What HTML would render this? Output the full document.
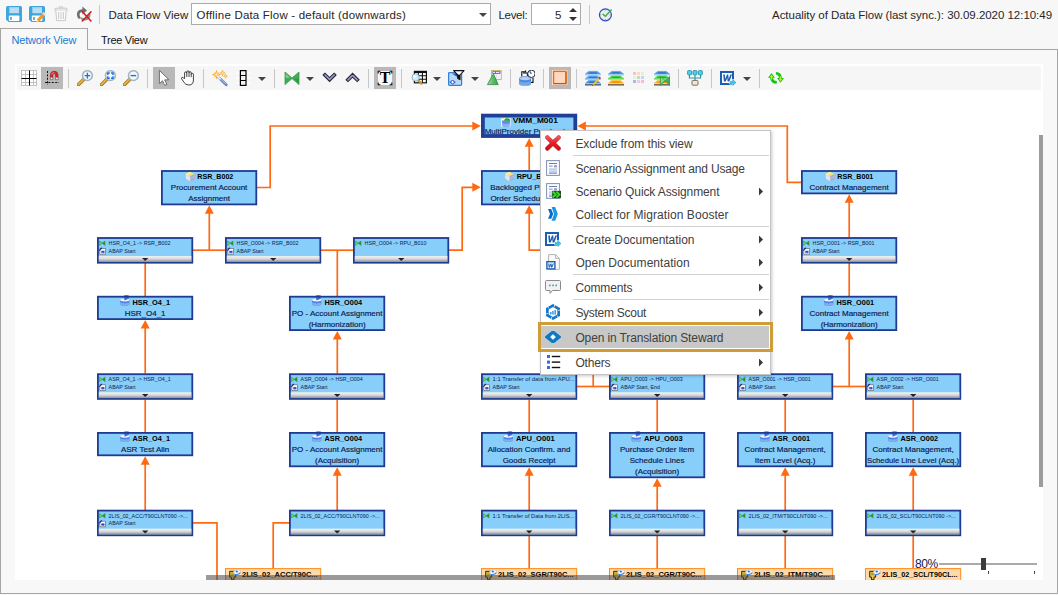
<!DOCTYPE html>
<html lang="en"><head><meta charset="utf-8"><title>Data Flow View</title>
<style>
*{box-sizing:border-box;margin:0;padding:0}
html,body{width:1058px;height:595px;overflow:hidden;background:#f7f7f7;font-family:"Liberation Sans",sans-serif;font-size:12px;color:#262626}
.abs{position:absolute}
#top{position:absolute;left:0;top:0;width:1058px;height:29px}
.tic{position:absolute;top:6px;width:16px;height:16px}
.vsep{position:absolute;top:5px;width:1px;height:19px;background:#c8c8c8}
.lbl{position:absolute;top:7px;height:16px;line-height:16px;white-space:nowrap;font-size:11.5px;color:#262626}
.box{position:absolute;top:3px;height:22px;background:#fff;border:1px solid #ababab}
.tabs{position:absolute;left:0;top:28px;height:22px}
.tab{position:absolute;top:0;height:22px;line-height:22px;font-size:11px;white-space:nowrap}
#panel{position:absolute;left:0;top:49px;width:1058px;height:545px;border:1px solid #a6a6a6;background:#f8f8f8}
#tabact{position:absolute;left:0;top:28px;width:88px;height:22px;border:1px solid #a6a6a6;border-bottom:none;background:#f8f8f8}
#canvas{position:absolute;left:15px;top:64px;width:1028px;height:516px;background:#fff;overflow:hidden}
#ctb{position:absolute;left:2px;top:2px;width:1024px;height:24px;background:#f6f6f6}
.ti{position:absolute;top:70px;width:16px;height:16px}
.ti svg,.tic svg,.mic svg{display:block}
.pressed{position:absolute;top:67px;width:22px;height:22px;background:#b9b9b9}
.tsep{position:absolute;top:69px;width:1px;height:19px;background:#c6c6c6}
.tdd{position:absolute;top:77px;width:0;height:0;border-left:4px solid transparent;border-right:4px solid transparent;border-top:4px solid #444}
svg.dg{position:absolute;left:0;top:0}
.menu{position:absolute;left:540px;top:130px;width:231px;height:245px;background:#fff;border:1px solid #c4c4c4;box-shadow:1px 1px 3px rgba(0,0,0,.22);padding-top:1px}
.mi{position:relative;height:23px;line-height:23px;white-space:nowrap}
.mi.hl::before{content:"";position:absolute;left:0;right:1px;top:0;bottom:1px;background:#c8c8c8}
.mic{position:absolute;left:4px;top:3px;width:16px;height:16px}
.mt{position:absolute;left:34.4px;top:1.1px;font-size:12px;color:#404040}
.marr{position:absolute;right:7px;top:7.5px;width:4px;height:8px;background:#3a3a3a;clip-path:polygon(0 0,100% 50%,0 100%)}
.msep{height:2px;margin-left:32px;margin-right:1px;border-top:1px solid #d2d2d2}
.gold{position:absolute;left:538px;top:322px;width:235px;height:30px;border:3px solid #cf9d37}
#vsb{position:absolute;left:1039px;top:135px;width:4px;height:352px;background:#9c9c9c}
#hsb{position:absolute;left:206px;top:575px;width:629px;height:5px;background:rgba(75,75,75,.56)}
#zoom{position:absolute;left:0;top:0}
</style></head><body>

<div id="top">
<div class="tic" style="left:6px"><svg width="16" height="16" viewBox="0 0 16 16" ><path d="M1.5 0 H14.5 Q16 0 16 1.5 V14.5 Q16 16 14.5 16 H2.5 L0 13.5 V1.5 Q0 0 1.5 0Z" fill="#3fa5dd"/><rect x="3.4" y="1" width="9.6" height="6.2" fill="#b9def3"/><rect x="3.4" y="1" width="9.6" height="1.2" fill="#9fd0ee"/><rect x="2.8" y="9.6" width="10.6" height="5.4" rx="0.8" fill="#fff"/><rect x="4.2" y="11" width="1.6" height="3" fill="#3fa5dd"/></svg></div>
<div class="tic" style="left:29px"><svg width="16" height="16" viewBox="0 0 16 16" style="overflow:visible"><path d="M1.5 0 H14.5 Q16 0 16 1.5 V14.5 Q16 16 14.5 16 H2.5 L0 13.5 V1.5 Q0 0 1.5 0Z" fill="#3fa5dd"/><rect x="3.4" y="1" width="9.6" height="6.2" fill="#b9def3"/><rect x="3.4" y="1" width="9.6" height="1.2" fill="#9fd0ee"/><rect x="2.8" y="9.6" width="10.6" height="5.4" rx="0.8" fill="#fff"/><rect x="4.2" y="11" width="1.6" height="3" fill="#3fa5dd"/><path d="M7.4 16 L8.2 13 L13.8 7 L16.2 9.2 L10.4 15.2 Z" fill="#f59a23"/><path d="M13.2 7.6 L14.2 6.6 Q15 6 15.8 6.8 L16.4 7.4 Q17 8.2 16.2 9 L15.6 9.6 Z" fill="#e8e8e8" stroke="#c8c8c8" stroke-width="0.4"/><path d="M7.4 16 L8 13.6 L9.8 15.4 Z" fill="#fbe3b5"/></svg></div>
<div class="tic" style="left:54px"><svg width="14" height="16" viewBox="0 0 14 16" ><path d="M5.4 2 V0.8 H8.6 V2" fill="none" stroke="#c9c9c9" stroke-width="1"/><path d="M0.6 3.6 Q0.6 2.2 2 2.2 H12 Q13.4 2.2 13.4 3.6 V4.2 H0.6 Z" fill="#f3f3f3" stroke="#c9c9c9" stroke-width="1"/><path d="M1.8 4.4 L2.6 14.6 H11.4 L12.2 4.4" fill="#fafafa" stroke="#c9c9c9" stroke-width="1"/><path d="M4.6 6 V13 M7 6 V13 M9.4 6 V13" stroke="#c9c9c9" stroke-width="1"/></svg></div>
<div class="tic" style="left:76px"><svg width="16" height="16" viewBox="0 0 16 16" ><path d="M1 9.4 Q0.2 3.6 6.4 3.2 L6.4 0.6 L11 4.6 L6.4 8.4 L6.4 6 Q3.4 6 3.6 9.2 Q3.8 10.6 4.8 11.6 L3 13 Q1.4 11.6 1 9.4Z" fill="#6f6f6f"/><path d="M4.2 12.4 Q8 16.4 12.6 13.2 Q15 11 14.4 7.6 L12.2 8 Q12.6 10.4 11 11.8 Q8.4 13.6 5.8 11.2 Z" fill="#8c8c8c"/><path d="M6.4 5.8 L15 15 M15 5.8 L6.4 15" stroke="#d81818" stroke-width="1.6" stroke-linecap="round"/></svg></div>
<div class="vsep" style="left:99px"></div>
<div class="lbl" id="l1" style="left:108.5px">Data Flow View</div>
<div class="box" style="left:191px;width:300px"><div class="lbl" id="l2" style="left:4.6px;top:3px;letter-spacing:0.196px">Offline Data Flow - default (downwards)</div>
<div class="tdd" style="left:287px;top:9px;position:absolute"></div></div>
<div class="lbl" id="l3" style="left:498.5px;letter-spacing:-0.315px">Level:</div>
<div class="box" style="left:531px;width:50px"><div class="lbl" id="l4" style="left:23px;top:3px">5</div>
<div class="abs" style="left:37px;top:4px;width:0;height:0;border-left:4px solid transparent;border-right:4px solid transparent;border-bottom:4px solid #333"></div>
<div class="abs" style="left:37px;top:13px;width:0;height:0;border-left:4px solid transparent;border-right:4px solid transparent;border-top:4px solid #333"></div>
</div>
<div class="vsep" style="left:589px"></div>
<div class="tic" style="left:598px"><svg width="16" height="16" viewBox="0 0 16 16" ><circle cx="7.4" cy="8.8" r="6" fill="#ececec" stroke="#3149c9" stroke-width="1.2"/><path d="M7.4 3.6 V4.6 M7.4 13 V14 M2.2 8.8 H3.2 M11.6 8.8 H12.6" stroke="#888" stroke-width="0.8"/><path d="M4.6 8 L7.4 10.2 L13.6 3.6" fill="none" stroke="#3db44a" stroke-width="1.5"/></svg></div>
<div class="lbl" id="l5" style="right:6px;letter-spacing:-0.034px">Actuality of Data Flow (last sync.): 30.09.2020 12:10:49</div>
</div>

<div id="panel"></div>
<div id="tabact"></div>
<div class="tab" id="t1" style="left:11.5px;letter-spacing:-0.2px;top:29px;color:#1b79d3;position:absolute">Network View</div>
<div class="tab" id="t2" style="left:101px;letter-spacing:-0.29px;top:29px;color:#111;position:absolute">Tree View</div>
<div id="canvas">
<div id="ctb">
<div style="position:absolute;left:-17px;top:-66px"><div class="ti" style="left:21px"><svg width="16" height="16" viewBox="0 0 16 16" ><rect x="0" y="0" width="16" height="16" fill="#fff"/><path d="M0.5 0 V16 M0 0.5 H16" stroke="#c2c2c2" stroke-width="1"/><path d="M4.5 0 V16 M0 4.5 H16" stroke="#c2c2c2" stroke-width="1"/><path d="M12.5 0 V16 M0 12.5 H16" stroke="#c2c2c2" stroke-width="1"/><path d="M15.5 0 V16 M0 15.5 H16" stroke="#c2c2c2" stroke-width="1"/><path d="M8.5 0.5 V15.5 M0.5 8.5 H15.5" stroke="#000" stroke-width="1"/></svg></div>
<div class="pressed" style="left:41px"></div>
<div class="ti" style="left:44px"><svg width="16" height="16" viewBox="0 0 16 16" ><path d="M3.5 1 V15" stroke="#111" stroke-width="1" stroke-dasharray="2 1.4"/><path d="M1 12.5 H15" stroke="#111" stroke-width="1" stroke-dasharray="2 1.4"/><path d="M6.4 9.6 V5 Q6.4 1.2 10.2 1.2 Q14 1.2 14 5 V9.6 H11.6 V5 Q11.6 3.6 10.2 3.6 Q8.8 3.6 8.8 5 V9.6 Z" fill="#d8262c" stroke="#8c1418" stroke-width="0.6"/><rect x="6.4" y="7.4" width="2.4" height="2.2" fill="#e8e8e8" stroke="#777" stroke-width="0.5"/><rect x="11.6" y="7.4" width="2.4" height="2.2" fill="#e8e8e8" stroke="#777" stroke-width="0.5"/><path d="M7.6 4.6 Q7.8 2.6 10 2.4" fill="none" stroke="#f59a9c" stroke-width="0.8"/></svg></div>
<div class="tsep" style="left:68px"></div>
<div class="ti" style="left:77px"><svg width="16" height="16" viewBox="0 0 16 16" ><path d="M1.6 14.6 L6.6 9.6" stroke="#a9791f" stroke-width="3.6" stroke-linecap="round"/><path d="M1.5 14.3 L6.2 9.6" stroke="#e3b54e" stroke-width="1.7" stroke-linecap="round"/><circle cx="10.4" cy="5.6" r="4.9" fill="#f2f8fc" stroke="#a3b6bf" stroke-width="1.5"/><path d="M10.4 2.8 V8.4 M7.6 5.6 H13.2" stroke="#1e6ee8" stroke-width="1.4"/></svg></div>
<div class="ti" style="left:100px"><svg width="16" height="16" viewBox="0 0 16 16" ><path d="M1.6 14.6 L6.6 9.6" stroke="#a9791f" stroke-width="3.6" stroke-linecap="round"/><path d="M1.5 14.3 L6.2 9.6" stroke="#e3b54e" stroke-width="1.7" stroke-linecap="round"/><circle cx="10.4" cy="5.6" r="4.9" fill="#f2f8fc" stroke="#a3b6bf" stroke-width="1.5"/><path d="M7.8 5 V3 H9.8 M11 3 H13 V5 M13 6.2 V8.2 H11 M9.8 8.2 H7.8 V6.2" fill="none" stroke="#1e6ee8" stroke-width="1.4"/></svg></div>
<div class="ti" style="left:123px"><svg width="16" height="16" viewBox="0 0 16 16" ><path d="M1.6 14.6 L6.6 9.6" stroke="#a9791f" stroke-width="3.6" stroke-linecap="round"/><path d="M1.5 14.3 L6.2 9.6" stroke="#e3b54e" stroke-width="1.7" stroke-linecap="round"/><circle cx="10.4" cy="5.6" r="4.9" fill="#f2f8fc" stroke="#a3b6bf" stroke-width="1.5"/><path d="M7.6 5.6 H13.2" stroke="#1e6ee8" stroke-width="1.4"/></svg></div>
<div class="tsep" style="left:147px"></div>
<div class="pressed" style="left:153px"></div>
<div class="ti" style="left:156px"><svg width="16" height="16" viewBox="0 0 16 16" ><path d="M4.6 2 V14.6 L7.6 12 L9.6 16 L11.6 15 L9.6 11 L13.4 10.8 Z" fill="#9a9a9a" opacity="0.5"/><path d="M3.4 0.4 V13.6 L6.5 10.8 L8.7 15.4 L10.9 14.4 L8.7 9.9 L12.9 9.7 Z" fill="#fff" stroke="#707070" stroke-width="1" stroke-linejoin="round"/></svg></div>
<div class="ti" style="left:179px"><svg width="16" height="16" viewBox="0 0 16 16" style="overflow:visible"><path d="M5.6 8.6 V3 Q5.6 1.9 6.7 1.9 Q7.8 1.9 7.8 3 V2 Q7.8 0.9 8.9 0.9 Q10 0.9 10 2 V2.8 Q10 1.7 11.1 1.7 Q12.2 1.7 12.2 2.8 V4.4 Q12.2 3.4 13.3 3.4 Q14.4 3.4 14.4 4.4 V10 Q14.4 15 9.8 15 Q6.6 15 5.2 12.6 L2.6 8.8 Q2.1 7.8 2.9 7.4 Q3.8 7.1 4.5 8 Z" fill="#fff" stroke="#111" stroke-width="0.8" stroke-linejoin="round"/><path d="M7.8 3 V7 M10 2.8 V7 M12.2 4.4 V7.2" stroke="#111" stroke-width="0.8"/></svg></div>
<div class="tsep" style="left:203px"></div>
<div class="ti" style="left:212px"><svg width="16" height="16" viewBox="0 0 16 16" style="overflow:visible"><path d="M4.4 -0.20000000000000018 L5.456 3.5439999999999996 L9.2 4.6 L5.456 5.656 L4.4 9.399999999999999 L3.3440000000000003 5.656 L-0.39999999999999947 4.6 L3.3440000000000003 3.5439999999999996 Z" fill="#ff8f24"/><g transform="rotate(45 4.4 4.6)"><path d="M4.4 1.0 L5.192 3.808 L8.0 4.6 L5.192 5.3919999999999995 L4.4 8.2 L3.6080000000000005 5.3919999999999995 L0.8000000000000007 4.6 L3.6080000000000005 3.808 Z" fill="#ffa338"/></g><path d="M4.4 1.6239999999999997 L5.292800000000001 3.7072 L7.376 4.6 L5.292800000000001 5.4928 L4.4 7.576 L3.5072000000000005 5.4928 L1.4240000000000004 4.6 L3.5072000000000005 3.7072 Z" fill="#ffd65a"/><circle cx="4.4" cy="4.6" r="0.96" fill="#fff6cc"/><path d="M10.6 -0.6000000000000001 L11.392 2.208 L14.2 3 L11.392 3.792 L10.6 6.6 L9.808 3.792 L7.0 3 L9.808 2.208 Z" fill="#ff8f24"/><g transform="rotate(45 10.6 3)"><path d="M10.6 0.2999999999999998 L11.193999999999999 2.4059999999999997 L13.3 3 L11.193999999999999 3.5940000000000003 L10.6 5.7 L10.006 3.5940000000000003 L7.8999999999999995 3 L10.006 2.4059999999999997 Z" fill="#ffa338"/></g><path d="M10.6 0.7679999999999998 L11.2696 2.3304 L12.832 3 L11.2696 3.6696 L10.6 5.232 L9.930399999999999 3.6696 L8.367999999999999 3 L9.930399999999999 2.3304 Z" fill="#ffd65a"/><circle cx="10.6" cy="3" r="0.72" fill="#fff6cc"/><path d="M13.6 3.4000000000000004 L14.216 5.5840000000000005 L16.4 6.2 L14.216 6.816 L13.6 9.0 L12.984 6.816 L10.8 6.2 L12.984 5.5840000000000005 Z" fill="#ff8f24"/><g transform="rotate(45 13.6 6.2)"><path d="M13.6 4.1000000000000005 L14.062 5.738 L15.7 6.2 L14.062 6.662 L13.6 8.3 L13.138 6.662 L11.5 6.2 L13.138 5.738 Z" fill="#ffa338"/></g><path d="M13.6 4.464 L14.1208 5.6792 L15.336 6.2 L14.1208 6.7208000000000006 L13.6 7.936 L13.0792 6.7208000000000006 L11.863999999999999 6.2 L13.0792 5.6792 Z" fill="#ffd65a"/><circle cx="13.6" cy="6.2" r="0.56" fill="#fff6cc"/><path d="M6 6.8 L14.2 14.8" stroke="#6d7fb4" stroke-width="2.8" stroke-linecap="round"/><path d="M5.8 6.4 L8 8.6" stroke="#e8ecf8" stroke-width="2.2" stroke-linecap="round"/><path d="M7 7.4 L13.8 14" stroke="#c4cdec" stroke-width="0.9" stroke-linecap="round"/></svg></div>
<div class="ti" style="left:235px"><svg width="16" height="16" viewBox="0 0 16 16" ><rect x="5.4" y="0.6" width="5.6" height="14.8" fill="#f2f2f2" stroke="#000" stroke-width="1.2"/><path d="M5.4 5.5 H11 M5.4 10.5 H11" stroke="#000" stroke-width="1.2"/><path d="M1 3 H4 M1 8 H4 M1 13 H4 M12.4 3 H15.4 M12.4 8 H15.4 M12.4 13 H15.4" stroke="#fff" stroke-width="1.6"/></svg></div>
<div class="tdd" style="left:258px"></div>
<div class="tsep" style="left:274px"></div>
<div class="ti" style="left:284px"><svg width="16" height="16" viewBox="0 0 16 16" ><path d="M1 2 L8 8 L15 2 V14.6 L8 8.6 L1 14.6 Z" fill="#3fae55" stroke="#2c8c42" stroke-width="0.7" stroke-linejoin="round"/><path d="M1.6 3.4 L6 7.6 L1.6 8 Z" fill="#7fd08c"/><path d="M14.4 13 L10 8.8 L14.4 8.6 Z" fill="#2f9646"/></svg></div>
<div class="tdd" style="left:306px"></div>
<div class="ti" style="left:322px"><svg width="16" height="16" viewBox="0 0 16 16" ><path d="M1.2 5 L3 3.2 L7.6 7.6 L12.2 3.2 L14 5 L7.6 11.4 Z" fill="#9c9cc6" stroke="#26263e" stroke-width="1.1" stroke-linejoin="miter"/></svg></div>
<div class="ti" style="left:345px"><svg width="16" height="16" viewBox="0 0 16 16" ><path d="M1.2 9.8 L3 11.6 L7.6 7.2 L12.2 11.6 L14 9.8 L7.6 3.4 Z" fill="#9c9cc6" stroke="#26263e" stroke-width="1.1" stroke-linejoin="miter"/></svg></div>
<div class="tsep" style="left:368px"></div>
<div class="pressed" style="left:374px"></div>
<div class="ti" style="left:377px"><svg width="16" height="16" viewBox="0 0 16 16" ><rect x="1" y="1" width="14" height="14" fill="#f7f7f7"/><path d="M1.2 3.4 V1.2 H3.4 M12.6 1.2 H14.8 V3.4 M14.8 12.6 V14.8 H12.6 M3.4 14.8 H1.2 V12.6" fill="none" stroke="#111" stroke-width="1.1"/><text x="8" y="13.4" font-family="Liberation Serif, serif" font-weight="bold" font-size="16" text-anchor="middle" fill="#000">T</text></svg></div>
<div class="tsep" style="left:401px"></div>
<div class="ti" style="left:411px"><svg width="16" height="16" viewBox="0 0 16 16" ><rect x="3.4" y="1.4" width="12" height="11.4" fill="#fff" stroke="#111" stroke-width="1.2"/><rect x="3.4" y="1.4" width="12" height="1.6" fill="#111"/><path d="M7.4 1.4 V12.8 M11.4 1.4 V12.8 M3.4 5.8 H15.4 M3.4 9.2 H15.4" stroke="#111" stroke-width="1.1"/><path d="M7 10 L10.4 13.6" stroke="#c8962e" stroke-width="2.4" stroke-linecap="round"/><circle cx="4.6" cy="7.4" r="3.6" fill="#d4ecfa" stroke="#8fb4d0" stroke-width="1"/><circle cx="3.8" cy="6.6" r="1.3" fill="#fff"/></svg></div>
<div class="tdd" style="left:433px"></div>
<div class="ti" style="left:448px"><svg width="16" height="16" viewBox="0 0 16 16" style="overflow:visible"><rect x="0.6" y="2.6" width="13" height="12.8" rx="0.8" fill="#bcd7f5" stroke="#2f80d8" stroke-width="1.2"/><path d="M4 3.4 L10.6 3.4 L10.6 8 Z" fill="#2f57b8"/><circle cx="4.6" cy="12.2" r="1.7" fill="#fff" stroke="#1e4fc0" stroke-width="1"/><path d="M1.6 12.2 H3 M6.2 12.2 H7.6" stroke="#1e4fc0" stroke-width="1"/><path d="M5.6 0.6 H16 L12 5 V9.6 L9.8 8.4 V5 Z" fill="#fff" stroke="#111" stroke-width="1.1" stroke-linejoin="round"/><path d="M9.8 4.8 L12 4.8 V9.6 L9.8 8.4 Z" fill="#111"/></svg></div>
<div class="tdd" style="left:471px"></div>
<div class="ti" style="left:486px"><svg width="16" height="16" viewBox="0 0 16 16" ><defs><linearGradient id="gt" x1="0" y1="0" x2="1" y2="0"><stop offset="0" stop-color="#9fdca4"/><stop offset="0.6" stop-color="#55b862"/><stop offset="1" stop-color="#3f9f4e"/></linearGradient></defs><rect x="5.6" y="0.4" width="9.6" height="9.2" fill="#fff" stroke="#c8a85c" stroke-width="0.9"/><rect x="6.4" y="1.2" width="8" height="2.6" fill="#2f60cc"/><rect x="7.2" y="1.9" width="1.6" height="1.1" fill="#fff"/><rect x="9.8" y="1.9" width="3.6" height="1.1" fill="#e4ecfb"/><rect x="6.4" y="4.4" width="8" height="4.4" fill="#eef1f8"/><path d="M10.4 4.4 V8.8" stroke="#d0d6e6" stroke-width="0.6"/><path d="M7.4 3.8 L12.2 14.6 H1.4 Z" fill="url(#gt)" stroke="#2e8c40" stroke-width="0.8" stroke-linejoin="round"/></svg></div>
<div class="tsep" style="left:510px"></div>
<div class="ti" style="left:519px"><svg width="16" height="16" viewBox="0 0 16 16" ><path d="M6.6 0.6 V1.8 H2.8 V6.6 M4 3 H8.4 V6" fill="none" stroke="#111" stroke-width="1.1"/><path d="M14 7.6 V12.4 H12" fill="none" stroke="#111" stroke-width="1.1"/><path d="M0.2 8.6 V13.4 Q0.2 15.6 6.1 15.6 Q12 15.6 12 13.4 V8.6 Z" fill="#4a88dc"/><path d="M0.2 11 Q6.1 13.4 12 11 V13.4 Q12 15.6 6.1 15.6 Q0.2 15.6 0.2 13.4 Z" fill="#6fa6ec"/><ellipse cx="6.1" cy="8.6" rx="5.9" ry="2.1" fill="#b4d2f6" stroke="#3f78cc" stroke-width="0.6"/><circle cx="12.4" cy="3.8" r="3.7" fill="#fff" stroke="#1a1a1a" stroke-width="0.9"/><path d="M12.4 3.8 L10.8 1.4" stroke="#1e6ee8" stroke-width="1.4"/></svg></div>
<div class="tsep" style="left:543px"></div>
<div class="pressed" style="left:549px"></div>
<div class="ti" style="left:552px"><svg width="16" height="16" viewBox="0 0 16 16" ><rect x="0" y="0" width="15.4" height="15" fill="#ffdccb"/><rect x="1.6" y="1.4" width="12.4" height="12.2" fill="#ffd9c4" stroke="#e8700a" stroke-width="1.3"/><path d="M14 2 V13.6 H2" fill="none" stroke="#b85a08" stroke-width="1"/></svg></div>
<div class="tsep" style="left:576px"></div>
<div class="ti" style="left:585px"><svg width="16" height="16" viewBox="0 0 16 16" ><path d="M3.8 10.1 H12.2 L16 13.2 V14.399999999999999 H0 V13.2 Z" fill="#4f9be8"/><path d="M4.8 11.4 H11.2 L12.6 12.7 H3.4 Z" fill="#2c66b8"/><path d="M0 13.8 H16" stroke="#a9d1fa" stroke-width="1.1"/><path d="M3.8 10.299999999999999 H12.2" stroke="#a9d1fa" stroke-width="0.5"/><rect x="0" y="14.4" width="16" height="1" fill="#2c2c2c"/><path d="M3.8 5.5 H12.2 L16 8.6 V9.8 H0 V8.6 Z" fill="#5ba4ec"/><path d="M4.8 6.8 H11.2 L12.6 8.1 H3.4 Z" fill="#2f6fc4"/><path d="M0 9.2 H16" stroke="#a9d1fa" stroke-width="1.1"/><path d="M3.8 5.7 H12.2" stroke="#a9d1fa" stroke-width="0.5"/><path d="M3.8 0.9 H12.2 L16 4.0 V5.2 H0 V4.0 Z" fill="#4f9be8"/><path d="M4.8 2.2 H11.2 L12.6 3.5 H3.4 Z" fill="#2f6fc4"/><path d="M0 4.6000000000000005 H16" stroke="#a9d1fa" stroke-width="1.1"/><path d="M3.8 1.1 H12.2" stroke="#a9d1fa" stroke-width="0.5"/><path d="M8 15.2 L14.4 8.2" stroke="#f0c53a" stroke-width="1.8"/><path d="M14 8.6 L15.2 7.2" stroke="#e0282e" stroke-width="1.8"/><path d="M7.4 15.8 L8.4 14.6" stroke="#444" stroke-width="1"/></svg></div>
<div class="ti" style="left:608px"><svg width="16" height="16" viewBox="0 0 16 16" ><path d="M3.8 10.1 H12.2 L16 13.2 V14.399999999999999 H0 V13.2 Z" fill="#ffb01f"/><path d="M4.8 11.4 H11.2 L12.6 12.7 H3.4 Z" fill="#f08a00"/><path d="M0 13.8 H16" stroke="#ffdc8c" stroke-width="1.1"/><path d="M3.8 10.299999999999999 H12.2" stroke="#ffdc8c" stroke-width="0.5"/><rect x="0" y="14.4" width="16" height="1" fill="#2c2c2c"/><path d="M3.8 5.5 H12.2 L16 8.6 V9.8 H0 V8.6 Z" fill="#46d644"/><path d="M4.8 6.8 H11.2 L12.6 8.1 H3.4 Z" fill="#1fae28"/><path d="M0 9.2 H16" stroke="#a4f0a0" stroke-width="1.1"/><path d="M3.8 5.7 H12.2" stroke="#a4f0a0" stroke-width="0.5"/><path d="M3.8 0.9 H12.2 L16 4.0 V5.2 H0 V4.0 Z" fill="#4f9be8"/><path d="M4.8 2.2 H11.2 L12.6 3.5 H3.4 Z" fill="#2f6fc4"/><path d="M0 4.6000000000000005 H16" stroke="#a9d1fa" stroke-width="1.1"/><path d="M3.8 1.1 H12.2" stroke="#a9d1fa" stroke-width="0.5"/></svg></div>
<div class="ti" style="left:630px"><svg width="16" height="16" viewBox="0 0 16 16" ><rect x="3" y="2" width="3" height="3" fill="#f8c3c3"/><rect x="7" y="2" width="3" height="3" fill="#f9d9c2"/><rect x="11" y="2" width="3" height="3" fill="#f6eac4"/><rect x="3" y="6" width="3" height="3" fill="#e2f1da"/><rect x="7" y="6" width="3" height="3" fill="#b9e2bb"/><rect x="11" y="6" width="3" height="3" fill="#badaf2"/><rect x="3" y="10" width="3" height="3" fill="#aabbdb"/><rect x="7" y="10" width="3" height="3" fill="#e9caea"/><rect x="11" y="10" width="3" height="3" fill="#f9b9d2"/></svg></div>
<div class="ti" style="left:654px"><svg width="16" height="16" viewBox="0 0 16 16" ><path d="M3.8 10.1 H12.2 L16 13.2 V14.399999999999999 H0 V13.2 Z" fill="#ffb01f"/><path d="M4.8 11.4 H11.2 L12.6 12.7 H3.4 Z" fill="#f08a00"/><path d="M0 13.8 H16" stroke="#ffdc8c" stroke-width="1.1"/><path d="M3.8 10.299999999999999 H12.2" stroke="#ffdc8c" stroke-width="0.5"/><rect x="0" y="14.4" width="16" height="1" fill="#2c2c2c"/><path d="M3.8 5.5 H12.2 L16 8.6 V9.8 H0 V8.6 Z" fill="#46d644"/><path d="M4.8 6.8 H11.2 L12.6 8.1 H3.4 Z" fill="#1fae28"/><path d="M0 9.2 H16" stroke="#a4f0a0" stroke-width="1.1"/><path d="M3.8 5.7 H12.2" stroke="#a4f0a0" stroke-width="0.5"/><path d="M3.8 0.9 H12.2 L16 4.0 V5.2 H0 V4.0 Z" fill="#4f9be8"/><path d="M4.8 2.2 H11.2 L12.6 3.5 H3.4 Z" fill="#2f6fc4"/><path d="M0 4.6000000000000005 H16" stroke="#a9d1fa" stroke-width="1.1"/><path d="M3.8 1.1 H12.2" stroke="#a9d1fa" stroke-width="0.5"/><path d="M6.4 6.4 L11 10.4 L16 6.2 V15.4 L11 11 L6.4 15.4 Z" fill="#3fae55" stroke="#2c8c42" stroke-width="0.5"/><path d="M7 7.6 L10.4 10.6 L7 14 Z" fill="#8fd69a"/></svg></div>
<div class="tsep" style="left:678px"></div>
<div class="ti" style="left:687px"><svg width="16" height="16" viewBox="0 0 16 16" ><path d="M2.4 5 V8 H13.6 V5 M8 5 V11" fill="none" stroke="#2a93a4" stroke-width="1.1"/><rect x="0.6" y="0.6" width="4" height="4.2" rx="0.8" fill="#4fd0f4" stroke="#2a93a4" stroke-width="0.9"/><rect x="6" y="0.6" width="4" height="4.2" rx="0.8" fill="#4fd0f4" stroke="#2a93a4" stroke-width="0.9"/><rect x="11.4" y="0.6" width="4" height="4.2" rx="0.8" fill="#4fd0f4" stroke="#2a93a4" stroke-width="0.9"/><rect x="5" y="10.4" width="6" height="4.8" rx="0.8" fill="#ece6d2" stroke="#7f7460" stroke-width="1"/></svg></div>
<div class="tsep" style="left:711px"></div>
<div class="ti" style="left:720px"><svg width="16" height="16" viewBox="0 0 16 16" ><rect x="1" y="2" width="12" height="12" fill="#fff" stroke="#1b5eb3" stroke-width="2"/><path d="M3.2 4.6 L4.9 4.6 L5.2 9 L7 4.6 L8.3 4.6 L8.6 9 L10.4 4.6 L12 4.6 L9.4 11.6 L7.6 11.6 L7.3 7.8 L5.7 11.6 L3.9 11.6 Z" fill="#1b5eb3"/><path d="M10 11.4 H12.8 V9.6 L16 12.6 L12.8 15.6 V13.8 H10 Z" fill="#3cc8ee" stroke="#fff" stroke-width="1.4" stroke-linejoin="round"/><path d="M10 11.4 H12.8 V9.6 L16 12.6 L12.8 15.6 V13.8 H10 Z" fill="#3cc8ee" stroke="#1d93c4" stroke-width="0.5"/></svg></div>
<div class="tdd" style="left:743px"></div>
<div class="tsep" style="left:759px"></div>
<div class="ti" style="left:768px"><svg width="16" height="16" viewBox="0 0 16 16" style="overflow:visible"><path d="M3.5 3 L7 7.7 H5 Q5.4 10.8 8.8 11.1 V13.8 Q2.6 13.6 2 7.7 H0 Z" fill="#12c612"/><path d="M12.5 12.8 L9 8.1 H11 Q10.6 5 7.9 4.6 V2 Q13.4 2.2 14 8.1 H16 Z" fill="#12c612"/><path d="M3.5 4.6 L5.2 7.2 H4.2 V9.6 H2.9 V7.2 H1.8 Z" fill="#c4f22a"/><path d="M12.5 11.4 L10.8 8.8 H11.8 V6.4 H13.1 V8.8 H14.2 Z" fill="#c4f22a"/></svg></div></div>
</div>
<svg class="dg" width="1028" height="516" viewBox="15 64 1028 516"><path d="M257 187.5 L270.2 187.5 L270.2 126 L475 126" fill="none" stroke="#ff6a10" stroke-width="1.7"/>
<polygon points="480.8,126 472.3,121.5 472.3,130.5" fill="#ff6a10"/>
<path d="M529.2 170 L529.2 144" fill="none" stroke="#ff6a10" stroke-width="1.7"/>
<polygon points="529.2,138.2 524.7,146.7 533.7,146.7" fill="#ff6a10"/>
<path d="M801 182.3 L787.3 182.3 L787.3 126 L583 126" fill="none" stroke="#ff6a10" stroke-width="1.7"/>
<polygon points="577.4,126 585.9,121.5 585.9,130.5" fill="#ff6a10"/>
<path d="M193 250.2 L225 250.2" fill="none" stroke="#ff6a10" stroke-width="1.7"/>
<path d="M209.3 250.2 L209.3 211" fill="none" stroke="#ff6a10" stroke-width="1.7"/>
<polygon points="209.3,205.3 204.8,213.8 213.8,213.8" fill="#ff6a10"/>
<path d="M321 250.2 L353 250.2" fill="none" stroke="#ff6a10" stroke-width="1.7"/>
<path d="M337.3 250.2 L337.3 296" fill="none" stroke="#ff6a10" stroke-width="1.7"/>
<path d="M449 250.2 L462.2 250.2 L462.2 187.3 L475 187.3" fill="none" stroke="#ff6a10" stroke-width="1.7"/>
<polygon points="480.8,187.3 472.3,182.8 472.3,191.8" fill="#ff6a10"/>
<path d="M600 250.2 L529.2 250.2 L529.2 211" fill="none" stroke="#ff6a10" stroke-width="1.7"/>
<polygon points="529.2,205.3 524.7,213.8 533.7,213.8" fill="#ff6a10"/>
<path d="M849.2 237 L849.2 200" fill="none" stroke="#ff6a10" stroke-width="1.7"/>
<polygon points="849.2,194.3 844.7,202.8 853.7,202.8" fill="#ff6a10"/>
<path d="M145.2 296 L145.2 263" fill="none" stroke="#ff6a10" stroke-width="1.7"/>
<path d="M849.2 296 L849.2 263" fill="none" stroke="#ff6a10" stroke-width="1.7"/>
<path d="M145.2 373.5 L145.2 326" fill="none" stroke="#ff6a10" stroke-width="1.7"/>
<polygon points="145.2,320 140.7,328.5 149.7,328.5" fill="#ff6a10"/>
<path d="M337.3 373.5 L337.3 337" fill="none" stroke="#ff6a10" stroke-width="1.7"/>
<polygon points="337.3,331 332.8,339.5 341.8,339.5" fill="#ff6a10"/>
<path d="M833 386.5 L865 386.5" fill="none" stroke="#ff6a10" stroke-width="1.7"/>
<path d="M849.2 386.5 L849.2 337" fill="none" stroke="#ff6a10" stroke-width="1.7"/>
<polygon points="849.2,331 844.7,339.5 853.7,339.5" fill="#ff6a10"/>
<path d="M577 386.5 L609 386.5" fill="none" stroke="#ff6a10" stroke-width="1.7"/>
<path d="M593.2 386.5 L593.2 340" fill="none" stroke="#ff6a10" stroke-width="1.7"/>
<path d="M145.2 432.2 L145.2 399.5" fill="none" stroke="#ff6a10" stroke-width="1.7"/>
<path d="M337.2 432.2 L337.2 399.5" fill="none" stroke="#ff6a10" stroke-width="1.7"/>
<path d="M529.2 432.2 L529.2 399.5" fill="none" stroke="#ff6a10" stroke-width="1.7"/>
<path d="M657.2 432.2 L657.2 399.5" fill="none" stroke="#ff6a10" stroke-width="1.7"/>
<path d="M785.2 432.2 L785.2 399.5" fill="none" stroke="#ff6a10" stroke-width="1.7"/>
<path d="M913.2 432.2 L913.2 399.5" fill="none" stroke="#ff6a10" stroke-width="1.7"/>
<path d="M145.2 510 L145.2 462" fill="none" stroke="#ff6a10" stroke-width="1.7"/>
<polygon points="145.2,456.2 140.7,464.7 149.7,464.7" fill="#ff6a10"/>
<path d="M337.2 510 L337.2 473" fill="none" stroke="#ff6a10" stroke-width="1.7"/>
<polygon points="337.2,467.2 332.7,475.7 341.7,475.7" fill="#ff6a10"/>
<path d="M529.2 510 L529.2 473" fill="none" stroke="#ff6a10" stroke-width="1.7"/>
<polygon points="529.2,467.2 524.7,475.7 533.7,475.7" fill="#ff6a10"/>
<path d="M657.2 510 L657.2 484" fill="none" stroke="#ff6a10" stroke-width="1.7"/>
<polygon points="657.2,478.2 652.7,486.7 661.7,486.7" fill="#ff6a10"/>
<path d="M785.2 510 L785.2 473" fill="none" stroke="#ff6a10" stroke-width="1.7"/>
<polygon points="785.2,467.2 780.7,475.7 789.7,475.7" fill="#ff6a10"/>
<path d="M913.2 510 L913.2 473" fill="none" stroke="#ff6a10" stroke-width="1.7"/>
<polygon points="913.2,467.2 908.7,475.7 917.7,475.7" fill="#ff6a10"/>
<path d="M193 522.8 L217 522.8 L217 581" fill="none" stroke="#ff6a10" stroke-width="1.7"/>
<path d="M289 522.8 L273.2 522.8 L273.2 568.5" fill="none" stroke="#ff6a10" stroke-width="1.7"/>
<path d="M529.2 536 L529.2 568.5" fill="none" stroke="#ff6a10" stroke-width="1.7"/>
<path d="M657.2 536 L657.2 568.5" fill="none" stroke="#ff6a10" stroke-width="1.7"/>
<path d="M785.2 536 L785.2 568.5" fill="none" stroke="#ff6a10" stroke-width="1.7"/>
<path d="M913.2 536 L913.2 568.5" fill="none" stroke="#ff6a10" stroke-width="1.7"/>
<defs><linearGradient id="gs" x1="0" y1="0" x2="0" y2="1"><stop offset="0" stop-color="#f6f6f6"/><stop offset="0.5" stop-color="#d6d6d6"/><stop offset="1" stop-color="#8e8e8e"/></linearGradient></defs>
<rect x="482.9" y="115.6" width="92.4" height="20.4" fill="#87cefa"/>
<g transform="translate(500.403,115.1)"><rect x="0.6" y="2.6" width="9.6" height="9" rx="1.2" fill="#f2f6fc"/><path d="M1.6 5.4 V10 Q1.6 11.8 5.6 11.8 Q9.6 11.8 9.6 10 V5.4 Z" fill="#5f8fe2"/><path d="M1.6 8 Q5.6 9.8 9.6 8 V10 Q9.6 11.8 5.6 11.8 Q1.6 11.8 1.6 10 Z" fill="#88b2f0"/><path d="M3.6 5.6 L4.6 3.6 H9 L10 5.6 Z" fill="#2f9a44"/><rect x="5" y="2.8" width="3.6" height="1" fill="#58c06a"/><rect x="0.8" y="2.8" width="2.4" height="1" fill="#f6e27a"/></g>
<rect x="482.9" y="115.6" width="92.4" height="20.4" fill="none" stroke="#1f3f98" stroke-width="3.8"/>
<text x="512.803" y="122.8" font-family="Liberation Sans, sans-serif" font-size="7.5" font-weight="bold" fill="#000" textLength="45.0" lengthAdjust="spacingAndGlyphs">VMM_M001</text>
<text x="529.1" y="133.8" font-family="Liberation Sans, sans-serif" font-size="8" fill="#0f1c4d" stroke="#0f1c4d" stroke-width="0.18" text-anchor="middle">MultiProvider Purchasing</text>
<rect x="161.9" y="171" width="94.4" height="33.4" fill="#87cefa"/>
<g transform="translate(184.842,171.3)"><path d="M5 0.6 L9.7 2.6 L9.7 7.8 L5 10.4 L0.5 7.8 L0.5 2.6 Z" fill="#dde3ee" stroke="#97a2b8" stroke-width="0.4"/><path d="M5 0.6 L9.7 2.6 L5 4.9 L0.5 2.6 Z" fill="#f3e36e"/><path d="M5 0.6 L7.3 1.6 L2.7 3.7 L0.5 2.6 Z" fill="#f9f0a4"/><path d="M5 4.9 L9.7 2.6 L9.7 7.8 L5 10.4 Z" fill="#a3b0d0"/><path d="M5 4.9 V10.4 M0.5 5.2 L5 7.6 L9.7 5.2" fill="none" stroke="#fff" stroke-width="0.35" opacity="0.8"/></g>
<rect x="161.9" y="171" width="94.4" height="33.4" fill="none" stroke="#1f3a93" stroke-width="1.8"/>
<text x="197.242" y="179.2" font-family="Liberation Sans, sans-serif" font-size="7.5" font-weight="bold" fill="#000" textLength="36.1" lengthAdjust="spacingAndGlyphs">RSR_B002</text>
<text x="209.1" y="190.2" font-family="Liberation Sans, sans-serif" font-size="8" fill="#0f1c4d" stroke="#0f1c4d" stroke-width="0.18" text-anchor="middle">Procurement Account</text>
<text x="209.1" y="201.2" font-family="Liberation Sans, sans-serif" font-size="8" fill="#0f1c4d" stroke="#0f1c4d" stroke-width="0.18" text-anchor="middle">Assignment</text>
<rect x="481.9" y="171" width="94.4" height="33.4" fill="#87cefa"/>
<g transform="translate(504.24,171.3)"><path d="M5 0.6 L9.7 2.6 L9.7 7.8 L5 10.4 L0.5 7.8 L0.5 2.6 Z" fill="#dde3ee" stroke="#97a2b8" stroke-width="0.4"/><path d="M5 0.6 L9.7 2.6 L5 4.9 L0.5 2.6 Z" fill="#f3e36e"/><path d="M5 0.6 L7.3 1.6 L2.7 3.7 L0.5 2.6 Z" fill="#f9f0a4"/><path d="M5 4.9 L9.7 2.6 L9.7 7.8 L5 10.4 Z" fill="#a3b0d0"/><path d="M5 4.9 V10.4 M0.5 5.2 L5 7.6 L9.7 5.2" fill="none" stroke="#fff" stroke-width="0.35" opacity="0.8"/></g>
<rect x="481.9" y="171" width="94.4" height="33.4" fill="none" stroke="#1f3a93" stroke-width="1.8"/>
<text x="516.64" y="179.2" font-family="Liberation Sans, sans-serif" font-size="7.5" font-weight="bold" fill="#000" textLength="37.3" lengthAdjust="spacingAndGlyphs">RPU_B010</text>
<text x="529.1" y="190.2" font-family="Liberation Sans, sans-serif" font-size="8" fill="#0f1c4d" stroke="#0f1c4d" stroke-width="0.18" text-anchor="middle">Backlogged Purchase</text>
<text x="529.1" y="201.2" font-family="Liberation Sans, sans-serif" font-size="8" fill="#0f1c4d" stroke="#0f1c4d" stroke-width="0.18" text-anchor="middle">Order Schedule Lines</text>
<rect x="801.9" y="171" width="94.4" height="22.4" fill="#87cefa"/>
<g transform="translate(824.842,171.3)"><path d="M5 0.6 L9.7 2.6 L9.7 7.8 L5 10.4 L0.5 7.8 L0.5 2.6 Z" fill="#dde3ee" stroke="#97a2b8" stroke-width="0.4"/><path d="M5 0.6 L9.7 2.6 L5 4.9 L0.5 2.6 Z" fill="#f3e36e"/><path d="M5 0.6 L7.3 1.6 L2.7 3.7 L0.5 2.6 Z" fill="#f9f0a4"/><path d="M5 4.9 L9.7 2.6 L9.7 7.8 L5 10.4 Z" fill="#a3b0d0"/><path d="M5 4.9 V10.4 M0.5 5.2 L5 7.6 L9.7 5.2" fill="none" stroke="#fff" stroke-width="0.35" opacity="0.8"/></g>
<rect x="801.9" y="171" width="94.4" height="22.4" fill="none" stroke="#1f3a93" stroke-width="1.8"/>
<text x="837.242" y="179.2" font-family="Liberation Sans, sans-serif" font-size="7.5" font-weight="bold" fill="#000" textLength="36.1" lengthAdjust="spacingAndGlyphs">RSR_B001</text>
<text x="849.1" y="190.2" font-family="Liberation Sans, sans-serif" font-size="8" fill="#0f1c4d" stroke="#0f1c4d" stroke-width="0.18" text-anchor="middle">Contract Management</text>
<rect x="97.9" y="238" width="94.4" height="24.7" fill="#87cefa" stroke="#1f3a93" stroke-width="1.8"/>
<rect x="98.8" y="256.1" width="92.6" height="5.8" fill="url(#gs)"/>
<polygon points="142,257.9 148.4,257.9 145.2,260.9" fill="#222"/>
<g transform="translate(99,240.4)"><path d="M0 0 L3.2 2.2 L6.4 0 L6.4 5.6 L3.2 3.4 L0 5.6 Z" fill="#3aa84a"/><path d="M0.5 1 L2.8 2.8 L0.5 4.6 Z" fill="#79cf84"/><path d="M5.9 1 L3.6 2.8 L5.9 4.6 Z" fill="#2c8a3a"/></g>
<text x="108.6" y="244.9" font-family="Liberation Sans, sans-serif" font-size="5.7" fill="#0f1c4d" textLength="61.8" lengthAdjust="spacingAndGlyphs">HSR_O4_1 -&gt; RSR_B002</text>
<g transform="translate(99,247.7)"><rect x="0.9" y="0.9" width="5.5" height="5.6" fill="#fff" stroke="#6c6c6c" stroke-width="0.7"/><path d="M0 2.6 L2.2 -0.4 L3.2 0.6 L0.6 3.2 Z" fill="#1420b4"/><rect x="2.4" y="3" width="3" height="2.6" fill="#5d78dc"/><rect x="2.4" y="3.6" width="3" height="1" fill="#2437b8"/></g>
<text x="108.6" y="252.7" font-family="Liberation Sans, sans-serif" font-size="5.7" fill="#0f1c4d" textLength="26.9" lengthAdjust="spacingAndGlyphs">ABAP Start</text>
<rect x="225.9" y="238" width="94.4" height="24.7" fill="#87cefa" stroke="#1f3a93" stroke-width="1.8"/>
<rect x="226.8" y="256.1" width="92.6" height="5.8" fill="url(#gs)"/>
<polygon points="270,257.9 276.4,257.9 273.2,260.9" fill="#222"/>
<g transform="translate(227,240.4)"><path d="M0 0 L3.2 2.2 L6.4 0 L6.4 5.6 L3.2 3.4 L0 5.6 Z" fill="#3aa84a"/><path d="M0.5 1 L2.8 2.8 L0.5 4.6 Z" fill="#79cf84"/><path d="M5.9 1 L3.6 2.8 L5.9 4.6 Z" fill="#2c8a3a"/></g>
<text x="236.6" y="244.9" font-family="Liberation Sans, sans-serif" font-size="5.7" fill="#0f1c4d" textLength="61.8" lengthAdjust="spacingAndGlyphs">HSR_O004 -&gt; RSR_B002</text>
<g transform="translate(227,247.7)"><rect x="0.9" y="0.9" width="5.5" height="5.6" fill="#fff" stroke="#6c6c6c" stroke-width="0.7"/><path d="M0 2.6 L2.2 -0.4 L3.2 0.6 L0.6 3.2 Z" fill="#1420b4"/><rect x="2.4" y="3" width="3" height="2.6" fill="#5d78dc"/><rect x="2.4" y="3.6" width="3" height="1" fill="#2437b8"/></g>
<text x="236.6" y="252.7" font-family="Liberation Sans, sans-serif" font-size="5.7" fill="#0f1c4d" textLength="26.9" lengthAdjust="spacingAndGlyphs">ABAP Start</text>
<rect x="353.9" y="238" width="94.4" height="24.7" fill="#87cefa" stroke="#1f3a93" stroke-width="1.8"/>
<rect x="354.8" y="256.1" width="92.6" height="5.8" fill="url(#gs)"/>
<polygon points="398,257.9 404.4,257.9 401.2,260.9" fill="#222"/>
<g transform="translate(355,240.4)"><path d="M0 0 L3.2 2.2 L6.4 0 L6.4 5.6 L3.2 3.4 L0 5.6 Z" fill="#3aa84a"/><path d="M0.5 1 L2.8 2.8 L0.5 4.6 Z" fill="#79cf84"/><path d="M5.9 1 L3.6 2.8 L5.9 4.6 Z" fill="#2c8a3a"/></g>
<text x="364.6" y="244.9" font-family="Liberation Sans, sans-serif" font-size="5.7" fill="#0f1c4d" textLength="61.8" lengthAdjust="spacingAndGlyphs">HSR_O004 -&gt; RPU_B010</text>
<rect x="801.9" y="238" width="94.4" height="24.7" fill="#87cefa" stroke="#1f3a93" stroke-width="1.8"/>
<rect x="802.8" y="256.1" width="92.6" height="5.8" fill="url(#gs)"/>
<polygon points="846,257.9 852.4,257.9 849.2,260.9" fill="#222"/>
<g transform="translate(803,240.4)"><path d="M0 0 L3.2 2.2 L6.4 0 L6.4 5.6 L3.2 3.4 L0 5.6 Z" fill="#3aa84a"/><path d="M0.5 1 L2.8 2.8 L0.5 4.6 Z" fill="#79cf84"/><path d="M5.9 1 L3.6 2.8 L5.9 4.6 Z" fill="#2c8a3a"/></g>
<text x="812.6" y="244.9" font-family="Liberation Sans, sans-serif" font-size="5.7" fill="#0f1c4d" textLength="61.8" lengthAdjust="spacingAndGlyphs">HSR_O001 -&gt; RSR_B001</text>
<g transform="translate(803,247.7)"><rect x="0.9" y="0.9" width="5.5" height="5.6" fill="#fff" stroke="#6c6c6c" stroke-width="0.7"/><path d="M0 2.6 L2.2 -0.4 L3.2 0.6 L0.6 3.2 Z" fill="#1420b4"/><rect x="2.4" y="3" width="3" height="2.6" fill="#5d78dc"/><rect x="2.4" y="3.6" width="3" height="1" fill="#2437b8"/></g>
<text x="812.6" y="252.7" font-family="Liberation Sans, sans-serif" font-size="5.7" fill="#0f1c4d" textLength="26.9" lengthAdjust="spacingAndGlyphs">ABAP Start</text>
<rect x="97.9" y="296.7" width="94.4" height="22.4" fill="#87cefa"/>
<g transform="translate(120.086,296.2)"><rect x="4.1" y="-1" width="4.5" height="5.4" fill="#4468d8"/><path d="M0 3.8 V7.8 Q0 9.6 4.7 9.6 Q9.4 9.6 9.4 7.8 V3.8 Z" fill="#4f86e4"/><path d="M0 6.4 Q4.7 8 9.4 6.4 V7.8 Q9.4 9.6 4.7 9.6 Q0 9.6 0 7.8 Z" fill="#7fadf2"/><path d="M0 3.9 Q0 2.6 4.1 2.5 L4.1 3.9 Q5.6 4.6 6.6 3.4 L8.6 2.9 Q9.4 3.2 9.4 3.9 Q9.4 5.3 4.7 5.3 Q0 5.3 0 3.9 Z" fill="#f4f7fd"/></g>
<rect x="97.9" y="296.7" width="94.4" height="22.4" fill="none" stroke="#1f3a93" stroke-width="1.8"/>
<text x="132.486" y="304.9" font-family="Liberation Sans, sans-serif" font-size="7.5" font-weight="bold" fill="#000" textLength="37.6" lengthAdjust="spacingAndGlyphs">HSR_O4_1</text>
<text x="145.1" y="315.9" font-family="Liberation Sans, sans-serif" font-size="8" fill="#0f1c4d" stroke="#0f1c4d" stroke-width="0.18" text-anchor="middle">HSR_O4_1</text>
<rect x="289.9" y="296.7" width="94.4" height="33.4" fill="#87cefa"/>
<g transform="translate(312.048,296.2)"><rect x="4.1" y="-1" width="4.5" height="5.4" fill="#4468d8"/><path d="M0 3.8 V7.8 Q0 9.6 4.7 9.6 Q9.4 9.6 9.4 7.8 V3.8 Z" fill="#4f86e4"/><path d="M0 6.4 Q4.7 8 9.4 6.4 V7.8 Q9.4 9.6 4.7 9.6 Q0 9.6 0 7.8 Z" fill="#7fadf2"/><path d="M0 3.9 Q0 2.6 4.1 2.5 L4.1 3.9 Q5.6 4.6 6.6 3.4 L8.6 2.9 Q9.4 3.2 9.4 3.9 Q9.4 5.3 4.7 5.3 Q0 5.3 0 3.9 Z" fill="#f4f7fd"/></g>
<rect x="289.9" y="296.7" width="94.4" height="33.4" fill="none" stroke="#1f3a93" stroke-width="1.8"/>
<text x="324.448" y="304.9" font-family="Liberation Sans, sans-serif" font-size="7.5" font-weight="bold" fill="#000" textLength="37.7" lengthAdjust="spacingAndGlyphs">HSR_O004</text>
<text x="337.1" y="315.9" font-family="Liberation Sans, sans-serif" font-size="8" fill="#0f1c4d" stroke="#0f1c4d" stroke-width="0.18" text-anchor="middle">PO - Account Assignment</text>
<text x="337.1" y="326.9" font-family="Liberation Sans, sans-serif" font-size="8" fill="#0f1c4d" stroke="#0f1c4d" stroke-width="0.18" text-anchor="middle">(Harmonization)</text>
<rect x="801.9" y="296.7" width="94.4" height="33.4" fill="#87cefa"/>
<g transform="translate(824.048,296.2)"><rect x="4.1" y="-1" width="4.5" height="5.4" fill="#4468d8"/><path d="M0 3.8 V7.8 Q0 9.6 4.7 9.6 Q9.4 9.6 9.4 7.8 V3.8 Z" fill="#4f86e4"/><path d="M0 6.4 Q4.7 8 9.4 6.4 V7.8 Q9.4 9.6 4.7 9.6 Q0 9.6 0 7.8 Z" fill="#7fadf2"/><path d="M0 3.9 Q0 2.6 4.1 2.5 L4.1 3.9 Q5.6 4.6 6.6 3.4 L8.6 2.9 Q9.4 3.2 9.4 3.9 Q9.4 5.3 4.7 5.3 Q0 5.3 0 3.9 Z" fill="#f4f7fd"/></g>
<rect x="801.9" y="296.7" width="94.4" height="33.4" fill="none" stroke="#1f3a93" stroke-width="1.8"/>
<text x="836.448" y="304.9" font-family="Liberation Sans, sans-serif" font-size="7.5" font-weight="bold" fill="#000" textLength="37.7" lengthAdjust="spacingAndGlyphs">HSR_O001</text>
<text x="849.1" y="315.9" font-family="Liberation Sans, sans-serif" font-size="8" fill="#0f1c4d" stroke="#0f1c4d" stroke-width="0.18" text-anchor="middle">Contract Management</text>
<text x="849.1" y="326.9" font-family="Liberation Sans, sans-serif" font-size="8" fill="#0f1c4d" stroke="#0f1c4d" stroke-width="0.18" text-anchor="middle">(Harmonization)</text>
<rect x="97.9" y="374.2" width="94.4" height="24.7" fill="#87cefa" stroke="#1f3a93" stroke-width="1.8"/>
<rect x="98.8" y="392.3" width="92.6" height="5.8" fill="url(#gs)"/>
<polygon points="142,394.1 148.4,394.1 145.2,397.1" fill="#222"/>
<g transform="translate(99,376.6)"><path d="M0 0 L3.2 2.2 L6.4 0 L6.4 5.6 L3.2 3.4 L0 5.6 Z" fill="#3aa84a"/><path d="M0.5 1 L2.8 2.8 L0.5 4.6 Z" fill="#79cf84"/><path d="M5.9 1 L3.6 2.8 L5.9 4.6 Z" fill="#2c8a3a"/></g>
<text x="108.6" y="381.1" font-family="Liberation Sans, sans-serif" font-size="5.7" fill="#0f1c4d" textLength="62.1" lengthAdjust="spacingAndGlyphs">ASR_O4_1 -&gt; HSR_O4_1</text>
<g transform="translate(99,383.9)"><rect x="0.9" y="0.9" width="5.5" height="5.6" fill="#fff" stroke="#6c6c6c" stroke-width="0.7"/><path d="M0 2.6 L2.2 -0.4 L3.2 0.6 L0.6 3.2 Z" fill="#1420b4"/><rect x="2.4" y="3" width="3" height="2.6" fill="#5d78dc"/><rect x="2.4" y="3.6" width="3" height="1" fill="#2437b8"/></g>
<text x="108.6" y="388.9" font-family="Liberation Sans, sans-serif" font-size="5.7" fill="#0f1c4d" textLength="26.9" lengthAdjust="spacingAndGlyphs">ABAP Start</text>
<rect x="289.9" y="374.2" width="94.4" height="24.7" fill="#87cefa" stroke="#1f3a93" stroke-width="1.8"/>
<rect x="290.8" y="392.3" width="92.6" height="5.8" fill="url(#gs)"/>
<polygon points="334,394.1 340.4,394.1 337.2,397.1" fill="#222"/>
<g transform="translate(291,376.6)"><path d="M0 0 L3.2 2.2 L6.4 0 L6.4 5.6 L3.2 3.4 L0 5.6 Z" fill="#3aa84a"/><path d="M0.5 1 L2.8 2.8 L0.5 4.6 Z" fill="#79cf84"/><path d="M5.9 1 L3.6 2.8 L5.9 4.6 Z" fill="#2c8a3a"/></g>
<text x="300.6" y="381.1" font-family="Liberation Sans, sans-serif" font-size="5.7" fill="#0f1c4d" textLength="62.1" lengthAdjust="spacingAndGlyphs">ASR_O004 -&gt; HSR_O004</text>
<g transform="translate(291,383.9)"><rect x="0.9" y="0.9" width="5.5" height="5.6" fill="#fff" stroke="#6c6c6c" stroke-width="0.7"/><path d="M0 2.6 L2.2 -0.4 L3.2 0.6 L0.6 3.2 Z" fill="#1420b4"/><rect x="2.4" y="3" width="3" height="2.6" fill="#5d78dc"/><rect x="2.4" y="3.6" width="3" height="1" fill="#2437b8"/></g>
<text x="300.6" y="388.9" font-family="Liberation Sans, sans-serif" font-size="5.7" fill="#0f1c4d" textLength="26.9" lengthAdjust="spacingAndGlyphs">ABAP Start</text>
<rect x="481.9" y="374.2" width="94.4" height="24.7" fill="#87cefa" stroke="#1f3a93" stroke-width="1.8"/>
<rect x="482.8" y="392.3" width="92.6" height="5.8" fill="url(#gs)"/>
<polygon points="526,394.1 532.4,394.1 529.2,397.1" fill="#222"/>
<g transform="translate(483,376.6)"><path d="M0 0 L3.2 2.2 L6.4 0 L6.4 5.6 L3.2 3.4 L0 5.6 Z" fill="#3aa84a"/><path d="M0.5 1 L2.8 2.8 L0.5 4.6 Z" fill="#79cf84"/><path d="M5.9 1 L3.6 2.8 L5.9 4.6 Z" fill="#2c8a3a"/></g>
<text x="492.6" y="381.1" font-family="Liberation Sans, sans-serif" font-size="5.7" fill="#0f1c4d" textLength="82.0" lengthAdjust="spacingAndGlyphs">1:1 Transfer of data from APU...</text>
<g transform="translate(483,383.9)"><rect x="0.9" y="0.9" width="5.5" height="5.6" fill="#fff" stroke="#6c6c6c" stroke-width="0.7"/><path d="M0 2.6 L2.2 -0.4 L3.2 0.6 L0.6 3.2 Z" fill="#1420b4"/><rect x="2.4" y="3" width="3" height="2.6" fill="#5d78dc"/><rect x="2.4" y="3.6" width="3" height="1" fill="#2437b8"/></g>
<text x="492.6" y="388.9" font-family="Liberation Sans, sans-serif" font-size="5.7" fill="#0f1c4d" textLength="26.9" lengthAdjust="spacingAndGlyphs">ABAP Start</text>
<rect x="609.9" y="374.2" width="94.4" height="24.7" fill="#87cefa" stroke="#1f3a93" stroke-width="1.8"/>
<rect x="610.8" y="392.3" width="92.6" height="5.8" fill="url(#gs)"/>
<polygon points="654,394.1 660.4,394.1 657.2,397.1" fill="#222"/>
<g transform="translate(611,376.6)"><path d="M0 0 L3.2 2.2 L6.4 0 L6.4 5.6 L3.2 3.4 L0 5.6 Z" fill="#3aa84a"/><path d="M0.5 1 L2.8 2.8 L0.5 4.6 Z" fill="#79cf84"/><path d="M5.9 1 L3.6 2.8 L5.9 4.6 Z" fill="#2c8a3a"/></g>
<text x="620.6" y="381.1" font-family="Liberation Sans, sans-serif" font-size="5.7" fill="#0f1c4d" textLength="62.1" lengthAdjust="spacingAndGlyphs">APU_O003 -&gt; HPU_O003</text>
<g transform="translate(611,383.9)"><rect x="0.9" y="0.9" width="5.5" height="5.6" fill="#fff" stroke="#6c6c6c" stroke-width="0.7"/><path d="M0 2.6 L2.2 -0.4 L3.2 0.6 L0.6 3.2 Z" fill="#1420b4"/><rect x="2.4" y="3" width="3" height="2.6" fill="#5d78dc"/><rect x="2.4" y="3.6" width="3" height="1" fill="#2437b8"/></g>
<text x="620.6" y="388.9" font-family="Liberation Sans, sans-serif" font-size="5.7" fill="#0f1c4d" textLength="39.3" lengthAdjust="spacingAndGlyphs">ABAP Start, End</text>
<rect x="737.9" y="374.2" width="94.4" height="24.7" fill="#87cefa" stroke="#1f3a93" stroke-width="1.8"/>
<rect x="738.8" y="392.3" width="92.6" height="5.8" fill="url(#gs)"/>
<polygon points="782,394.1 788.4,394.1 785.2,397.1" fill="#222"/>
<g transform="translate(739,376.6)"><path d="M0 0 L3.2 2.2 L6.4 0 L6.4 5.6 L3.2 3.4 L0 5.6 Z" fill="#3aa84a"/><path d="M0.5 1 L2.8 2.8 L0.5 4.6 Z" fill="#79cf84"/><path d="M5.9 1 L3.6 2.8 L5.9 4.6 Z" fill="#2c8a3a"/></g>
<text x="748.6" y="381.1" font-family="Liberation Sans, sans-serif" font-size="5.7" fill="#0f1c4d" textLength="62.1" lengthAdjust="spacingAndGlyphs">ASR_O001 -&gt; HSR_O001</text>
<g transform="translate(739,383.9)"><rect x="0.9" y="0.9" width="5.5" height="5.6" fill="#fff" stroke="#6c6c6c" stroke-width="0.7"/><path d="M0 2.6 L2.2 -0.4 L3.2 0.6 L0.6 3.2 Z" fill="#1420b4"/><rect x="2.4" y="3" width="3" height="2.6" fill="#5d78dc"/><rect x="2.4" y="3.6" width="3" height="1" fill="#2437b8"/></g>
<text x="748.6" y="388.9" font-family="Liberation Sans, sans-serif" font-size="5.7" fill="#0f1c4d" textLength="26.9" lengthAdjust="spacingAndGlyphs">ABAP Start</text>
<rect x="865.9" y="374.2" width="94.4" height="24.7" fill="#87cefa" stroke="#1f3a93" stroke-width="1.8"/>
<rect x="866.8" y="392.3" width="92.6" height="5.8" fill="url(#gs)"/>
<polygon points="910,394.1 916.4,394.1 913.2,397.1" fill="#222"/>
<g transform="translate(867,376.6)"><path d="M0 0 L3.2 2.2 L6.4 0 L6.4 5.6 L3.2 3.4 L0 5.6 Z" fill="#3aa84a"/><path d="M0.5 1 L2.8 2.8 L0.5 4.6 Z" fill="#79cf84"/><path d="M5.9 1 L3.6 2.8 L5.9 4.6 Z" fill="#2c8a3a"/></g>
<text x="876.6" y="381.1" font-family="Liberation Sans, sans-serif" font-size="5.7" fill="#0f1c4d" textLength="62.1" lengthAdjust="spacingAndGlyphs">ASR_O002 -&gt; HSR_O001</text>
<g transform="translate(867,383.9)"><rect x="0.9" y="0.9" width="5.5" height="5.6" fill="#fff" stroke="#6c6c6c" stroke-width="0.7"/><path d="M0 2.6 L2.2 -0.4 L3.2 0.6 L0.6 3.2 Z" fill="#1420b4"/><rect x="2.4" y="3" width="3" height="2.6" fill="#5d78dc"/><rect x="2.4" y="3.6" width="3" height="1" fill="#2437b8"/></g>
<text x="876.6" y="388.9" font-family="Liberation Sans, sans-serif" font-size="5.7" fill="#0f1c4d" textLength="26.9" lengthAdjust="spacingAndGlyphs">ABAP Start</text>
<rect x="97.9" y="432.9" width="94.4" height="22.4" fill="#87cefa"/>
<g transform="translate(120.191,432.4)"><rect x="4.1" y="-1" width="4.5" height="5.4" fill="#4468d8"/><path d="M0 3.8 V7.8 Q0 9.6 4.7 9.6 Q9.4 9.6 9.4 7.8 V3.8 Z" fill="#4f86e4"/><path d="M0 6.4 Q4.7 8 9.4 6.4 V7.8 Q9.4 9.6 4.7 9.6 Q0 9.6 0 7.8 Z" fill="#7fadf2"/><path d="M0 3.9 Q0 2.6 4.1 2.5 L4.1 3.9 Q5.6 4.6 6.6 3.4 L8.6 2.9 Q9.4 3.2 9.4 3.9 Q9.4 5.3 4.7 5.3 Q0 5.3 0 3.9 Z" fill="#f4f7fd"/></g>
<rect x="97.9" y="432.9" width="94.4" height="22.4" fill="none" stroke="#1f3a93" stroke-width="1.8"/>
<text x="132.591" y="441.1" font-family="Liberation Sans, sans-serif" font-size="7.5" font-weight="bold" fill="#000" textLength="37.4" lengthAdjust="spacingAndGlyphs">ASR_O4_1</text>
<text x="145.1" y="452.1" font-family="Liberation Sans, sans-serif" font-size="8" fill="#0f1c4d" stroke="#0f1c4d" stroke-width="0.18" text-anchor="middle">ASR Test Alin</text>
<rect x="289.9" y="432.9" width="94.4" height="33.4" fill="#87cefa"/>
<g transform="translate(312.153,432.4)"><rect x="4.1" y="-1" width="4.5" height="5.4" fill="#4468d8"/><path d="M0 3.8 V7.8 Q0 9.6 4.7 9.6 Q9.4 9.6 9.4 7.8 V3.8 Z" fill="#4f86e4"/><path d="M0 6.4 Q4.7 8 9.4 6.4 V7.8 Q9.4 9.6 4.7 9.6 Q0 9.6 0 7.8 Z" fill="#7fadf2"/><path d="M0 3.9 Q0 2.6 4.1 2.5 L4.1 3.9 Q5.6 4.6 6.6 3.4 L8.6 2.9 Q9.4 3.2 9.4 3.9 Q9.4 5.3 4.7 5.3 Q0 5.3 0 3.9 Z" fill="#f4f7fd"/></g>
<rect x="289.9" y="432.9" width="94.4" height="33.4" fill="none" stroke="#1f3a93" stroke-width="1.8"/>
<text x="324.553" y="441.1" font-family="Liberation Sans, sans-serif" font-size="7.5" font-weight="bold" fill="#000" textLength="37.5" lengthAdjust="spacingAndGlyphs">ASR_O004</text>
<text x="337.1" y="452.1" font-family="Liberation Sans, sans-serif" font-size="8" fill="#0f1c4d" stroke="#0f1c4d" stroke-width="0.18" text-anchor="middle">PO - Account Assignment</text>
<text x="337.1" y="463.1" font-family="Liberation Sans, sans-serif" font-size="8" fill="#0f1c4d" stroke="#0f1c4d" stroke-width="0.18" text-anchor="middle">(Acquisition)</text>
<rect x="481.9" y="432.9" width="94.4" height="33.4" fill="#87cefa"/>
<g transform="translate(503.552,432.4)"><rect x="4.1" y="-1" width="4.5" height="5.4" fill="#4468d8"/><path d="M0 3.8 V7.8 Q0 9.6 4.7 9.6 Q9.4 9.6 9.4 7.8 V3.8 Z" fill="#4f86e4"/><path d="M0 6.4 Q4.7 8 9.4 6.4 V7.8 Q9.4 9.6 4.7 9.6 Q0 9.6 0 7.8 Z" fill="#7fadf2"/><path d="M0 3.9 Q0 2.6 4.1 2.5 L4.1 3.9 Q5.6 4.6 6.6 3.4 L8.6 2.9 Q9.4 3.2 9.4 3.9 Q9.4 5.3 4.7 5.3 Q0 5.3 0 3.9 Z" fill="#f4f7fd"/></g>
<rect x="481.9" y="432.9" width="94.4" height="33.4" fill="none" stroke="#1f3a93" stroke-width="1.8"/>
<text x="515.952" y="441.1" font-family="Liberation Sans, sans-serif" font-size="7.5" font-weight="bold" fill="#000" textLength="38.7" lengthAdjust="spacingAndGlyphs">APU_O001</text>
<text x="529.1" y="452.1" font-family="Liberation Sans, sans-serif" font-size="8" fill="#0f1c4d" stroke="#0f1c4d" stroke-width="0.18" text-anchor="middle">Allocation Confirm. and</text>
<text x="529.1" y="463.1" font-family="Liberation Sans, sans-serif" font-size="8" fill="#0f1c4d" stroke="#0f1c4d" stroke-width="0.18" text-anchor="middle">Goods Receipt</text>
<rect x="609.9" y="432.9" width="94.4" height="44.4" fill="#87cefa"/>
<g transform="translate(631.552,432.4)"><rect x="4.1" y="-1" width="4.5" height="5.4" fill="#4468d8"/><path d="M0 3.8 V7.8 Q0 9.6 4.7 9.6 Q9.4 9.6 9.4 7.8 V3.8 Z" fill="#4f86e4"/><path d="M0 6.4 Q4.7 8 9.4 6.4 V7.8 Q9.4 9.6 4.7 9.6 Q0 9.6 0 7.8 Z" fill="#7fadf2"/><path d="M0 3.9 Q0 2.6 4.1 2.5 L4.1 3.9 Q5.6 4.6 6.6 3.4 L8.6 2.9 Q9.4 3.2 9.4 3.9 Q9.4 5.3 4.7 5.3 Q0 5.3 0 3.9 Z" fill="#f4f7fd"/></g>
<rect x="609.9" y="432.9" width="94.4" height="44.4" fill="none" stroke="#1f3a93" stroke-width="1.8"/>
<text x="643.952" y="441.1" font-family="Liberation Sans, sans-serif" font-size="7.5" font-weight="bold" fill="#000" textLength="38.7" lengthAdjust="spacingAndGlyphs">APU_O003</text>
<text x="657.1" y="452.1" font-family="Liberation Sans, sans-serif" font-size="8" fill="#0f1c4d" stroke="#0f1c4d" stroke-width="0.18" text-anchor="middle">Purchase Order Item</text>
<text x="657.1" y="463.1" font-family="Liberation Sans, sans-serif" font-size="8" fill="#0f1c4d" stroke="#0f1c4d" stroke-width="0.18" text-anchor="middle">Schedule Lines</text>
<text x="657.1" y="474.1" font-family="Liberation Sans, sans-serif" font-size="8" fill="#0f1c4d" stroke="#0f1c4d" stroke-width="0.18" text-anchor="middle">(Acquisition)</text>
<rect x="737.9" y="432.9" width="94.4" height="33.4" fill="#87cefa"/>
<g transform="translate(760.153,432.4)"><rect x="4.1" y="-1" width="4.5" height="5.4" fill="#4468d8"/><path d="M0 3.8 V7.8 Q0 9.6 4.7 9.6 Q9.4 9.6 9.4 7.8 V3.8 Z" fill="#4f86e4"/><path d="M0 6.4 Q4.7 8 9.4 6.4 V7.8 Q9.4 9.6 4.7 9.6 Q0 9.6 0 7.8 Z" fill="#7fadf2"/><path d="M0 3.9 Q0 2.6 4.1 2.5 L4.1 3.9 Q5.6 4.6 6.6 3.4 L8.6 2.9 Q9.4 3.2 9.4 3.9 Q9.4 5.3 4.7 5.3 Q0 5.3 0 3.9 Z" fill="#f4f7fd"/></g>
<rect x="737.9" y="432.9" width="94.4" height="33.4" fill="none" stroke="#1f3a93" stroke-width="1.8"/>
<text x="772.553" y="441.1" font-family="Liberation Sans, sans-serif" font-size="7.5" font-weight="bold" fill="#000" textLength="37.5" lengthAdjust="spacingAndGlyphs">ASR_O001</text>
<text x="785.1" y="452.1" font-family="Liberation Sans, sans-serif" font-size="8" fill="#0f1c4d" stroke="#0f1c4d" stroke-width="0.18" text-anchor="middle">Contract Management,</text>
<text x="785.1" y="463.1" font-family="Liberation Sans, sans-serif" font-size="8" fill="#0f1c4d" stroke="#0f1c4d" stroke-width="0.18" text-anchor="middle">Item Level (Acq.)</text>
<rect x="865.9" y="432.9" width="94.4" height="33.4" fill="#87cefa"/>
<g transform="translate(888.153,432.4)"><rect x="4.1" y="-1" width="4.5" height="5.4" fill="#4468d8"/><path d="M0 3.8 V7.8 Q0 9.6 4.7 9.6 Q9.4 9.6 9.4 7.8 V3.8 Z" fill="#4f86e4"/><path d="M0 6.4 Q4.7 8 9.4 6.4 V7.8 Q9.4 9.6 4.7 9.6 Q0 9.6 0 7.8 Z" fill="#7fadf2"/><path d="M0 3.9 Q0 2.6 4.1 2.5 L4.1 3.9 Q5.6 4.6 6.6 3.4 L8.6 2.9 Q9.4 3.2 9.4 3.9 Q9.4 5.3 4.7 5.3 Q0 5.3 0 3.9 Z" fill="#f4f7fd"/></g>
<rect x="865.9" y="432.9" width="94.4" height="33.4" fill="none" stroke="#1f3a93" stroke-width="1.8"/>
<text x="900.553" y="441.1" font-family="Liberation Sans, sans-serif" font-size="7.5" font-weight="bold" fill="#000" textLength="37.5" lengthAdjust="spacingAndGlyphs">ASR_O002</text>
<text x="913.1" y="452.1" font-family="Liberation Sans, sans-serif" font-size="8" fill="#0f1c4d" stroke="#0f1c4d" stroke-width="0.18" text-anchor="middle">Contract Management,</text>
<text x="913.1" y="463.1" font-family="Liberation Sans, sans-serif" font-size="8" fill="#0f1c4d" stroke="#0f1c4d" stroke-width="0.18" text-anchor="middle" textLength="92" lengthAdjust="spacingAndGlyphs">Schedule Line Level (Acq.)</text>
<rect x="97.9" y="510.6" width="94.4" height="24.7" fill="#87cefa" stroke="#1f3a93" stroke-width="1.8"/>
<rect x="98.8" y="528.7" width="92.6" height="5.8" fill="url(#gs)"/>
<polygon points="142,530.5 148.4,530.5 145.2,533.5" fill="#222"/>
<g transform="translate(99,513)"><path d="M0 0 L3.2 2.2 L6.4 0 L6.4 5.6 L3.2 3.4 L0 5.6 Z" fill="#3aa84a"/><path d="M0.5 1 L2.8 2.8 L0.5 4.6 Z" fill="#79cf84"/><path d="M5.9 1 L3.6 2.8 L5.9 4.6 Z" fill="#2c8a3a"/></g>
<text x="108.6" y="517.5" font-family="Liberation Sans, sans-serif" font-size="5.7" fill="#0f1c4d" textLength="79.0" lengthAdjust="spacingAndGlyphs">2LIS_02_ACC/T90CLNT090 -&gt;...</text>
<g transform="translate(99,520.3)"><rect x="0.9" y="0.9" width="5.5" height="5.6" fill="#fff" stroke="#6c6c6c" stroke-width="0.7"/><path d="M0 2.6 L2.2 -0.4 L3.2 0.6 L0.6 3.2 Z" fill="#1420b4"/><rect x="2.4" y="3" width="3" height="2.6" fill="#5d78dc"/><rect x="2.4" y="3.6" width="3" height="1" fill="#2437b8"/></g>
<text x="108.6" y="525.3" font-family="Liberation Sans, sans-serif" font-size="5.7" fill="#0f1c4d" textLength="26.9" lengthAdjust="spacingAndGlyphs">ABAP Start</text>
<rect x="289.9" y="510.6" width="94.4" height="24.7" fill="#87cefa" stroke="#1f3a93" stroke-width="1.8"/>
<rect x="290.8" y="528.7" width="92.6" height="5.8" fill="url(#gs)"/>
<polygon points="334,530.5 340.4,530.5 337.2,533.5" fill="#222"/>
<g transform="translate(291,513)"><path d="M0 0 L3.2 2.2 L6.4 0 L6.4 5.6 L3.2 3.4 L0 5.6 Z" fill="#3aa84a"/><path d="M0.5 1 L2.8 2.8 L0.5 4.6 Z" fill="#79cf84"/><path d="M5.9 1 L3.6 2.8 L5.9 4.6 Z" fill="#2c8a3a"/></g>
<text x="300.6" y="517.5" font-family="Liberation Sans, sans-serif" font-size="5.7" fill="#0f1c4d" textLength="79.0" lengthAdjust="spacingAndGlyphs">2LIS_02_ACC/T90CLNT090 -&gt;...</text>
<rect x="481.9" y="510.6" width="94.4" height="24.7" fill="#87cefa" stroke="#1f3a93" stroke-width="1.8"/>
<rect x="482.8" y="528.7" width="92.6" height="5.8" fill="url(#gs)"/>
<polygon points="526,530.5 532.4,530.5 529.2,533.5" fill="#222"/>
<g transform="translate(483,513)"><path d="M0 0 L3.2 2.2 L6.4 0 L6.4 5.6 L3.2 3.4 L0 5.6 Z" fill="#3aa84a"/><path d="M0.5 1 L2.8 2.8 L0.5 4.6 Z" fill="#79cf84"/><path d="M5.9 1 L3.6 2.8 L5.9 4.6 Z" fill="#2c8a3a"/></g>
<text x="492.6" y="517.5" font-family="Liberation Sans, sans-serif" font-size="5.7" fill="#0f1c4d" textLength="81.7" lengthAdjust="spacingAndGlyphs">1:1 Transfer of Data from 2LIS...</text>
<rect x="609.9" y="510.6" width="94.4" height="24.7" fill="#87cefa" stroke="#1f3a93" stroke-width="1.8"/>
<rect x="610.8" y="528.7" width="92.6" height="5.8" fill="url(#gs)"/>
<polygon points="654,530.5 660.4,530.5 657.2,533.5" fill="#222"/>
<g transform="translate(611,513)"><path d="M0 0 L3.2 2.2 L6.4 0 L6.4 5.6 L3.2 3.4 L0 5.6 Z" fill="#3aa84a"/><path d="M0.5 1 L2.8 2.8 L0.5 4.6 Z" fill="#79cf84"/><path d="M5.9 1 L3.6 2.8 L5.9 4.6 Z" fill="#2c8a3a"/></g>
<text x="620.6" y="517.5" font-family="Liberation Sans, sans-serif" font-size="5.7" fill="#0f1c4d" textLength="79.0" lengthAdjust="spacingAndGlyphs">2LIS_02_CGR/T90CLNT090 -&gt;...</text>
<rect x="737.9" y="510.6" width="94.4" height="24.7" fill="#87cefa" stroke="#1f3a93" stroke-width="1.8"/>
<rect x="738.8" y="528.7" width="92.6" height="5.8" fill="url(#gs)"/>
<polygon points="782,530.5 788.4,530.5 785.2,533.5" fill="#222"/>
<g transform="translate(739,513)"><path d="M0 0 L3.2 2.2 L6.4 0 L6.4 5.6 L3.2 3.4 L0 5.6 Z" fill="#3aa84a"/><path d="M0.5 1 L2.8 2.8 L0.5 4.6 Z" fill="#79cf84"/><path d="M5.9 1 L3.6 2.8 L5.9 4.6 Z" fill="#2c8a3a"/></g>
<text x="748.6" y="517.5" font-family="Liberation Sans, sans-serif" font-size="5.7" fill="#0f1c4d" textLength="79.0" lengthAdjust="spacingAndGlyphs">2LIS_02_ITM/T90CLNT090 -&gt;...</text>
<rect x="865.9" y="510.6" width="94.4" height="24.7" fill="#87cefa" stroke="#1f3a93" stroke-width="1.8"/>
<rect x="866.8" y="528.7" width="92.6" height="5.8" fill="url(#gs)"/>
<polygon points="910,530.5 916.4,530.5 913.2,533.5" fill="#222"/>
<g transform="translate(867,513)"><path d="M0 0 L3.2 2.2 L6.4 0 L6.4 5.6 L3.2 3.4 L0 5.6 Z" fill="#3aa84a"/><path d="M0.5 1 L2.8 2.8 L0.5 4.6 Z" fill="#79cf84"/><path d="M5.9 1 L3.6 2.8 L5.9 4.6 Z" fill="#2c8a3a"/></g>
<text x="876.6" y="517.5" font-family="Liberation Sans, sans-serif" font-size="5.7" fill="#0f1c4d" textLength="79.0" lengthAdjust="spacingAndGlyphs">2LIS_02_SCL/T90CLNT090 -&gt;...</text>
<rect x="225.5" y="568.6" width="95.2" height="14" fill="#ffd9a8" stroke="#ff8a1e" stroke-width="1"/>
<g transform="translate(229.2,569.7)"><path d="M0.5 1.6 H6.4 V7.4 H4.8 V10 H2.2 V7.4 H0.5 Z" fill="#e6c84a" stroke="#111" stroke-width="0.9"/><path d="M2 3.4 H4.6 M2 5 H4.6" stroke="#8a6d10" stroke-width="0.7"/><ellipse cx="7.8" cy="2.4" rx="3.6" ry="2.5" fill="#eaf2fc" stroke="#a8bcd8" stroke-width="0.5" transform="rotate(-18 7.8 2.4)"/><path d="M4.6 3.6 Q7 5.8 11 2.6 L11.2 3.6 Q7.4 7 4.8 4.6 Z" fill="#3f86d8"/><circle cx="7.6" cy="1.8" r="1.1" fill="#2f6fd0"/></g>
<text x="242" y="576.5" font-family="Liberation Sans, sans-serif" font-size="7.5" font-weight="bold" fill="#000" textLength="75.6" lengthAdjust="spacingAndGlyphs">2LIS_02_ACC/T90C...</text>
<rect x="481.5" y="568.6" width="95.2" height="14" fill="#ffd9a8" stroke="#ff8a1e" stroke-width="1"/>
<g transform="translate(485.2,569.7)"><path d="M0.5 1.6 H6.4 V7.4 H4.8 V10 H2.2 V7.4 H0.5 Z" fill="#e6c84a" stroke="#111" stroke-width="0.9"/><path d="M2 3.4 H4.6 M2 5 H4.6" stroke="#8a6d10" stroke-width="0.7"/><ellipse cx="7.8" cy="2.4" rx="3.6" ry="2.5" fill="#eaf2fc" stroke="#a8bcd8" stroke-width="0.5" transform="rotate(-18 7.8 2.4)"/><path d="M4.6 3.6 Q7 5.8 11 2.6 L11.2 3.6 Q7.4 7 4.8 4.6 Z" fill="#3f86d8"/><circle cx="7.6" cy="1.8" r="1.1" fill="#2f6fd0"/></g>
<text x="498" y="576.5" font-family="Liberation Sans, sans-serif" font-size="7.5" font-weight="bold" fill="#000" textLength="75.6" lengthAdjust="spacingAndGlyphs">2LIS_02_SGR/T90C...</text>
<rect x="609.5" y="568.6" width="95.2" height="14" fill="#ffd9a8" stroke="#ff8a1e" stroke-width="1"/>
<g transform="translate(613.2,569.7)"><path d="M0.5 1.6 H6.4 V7.4 H4.8 V10 H2.2 V7.4 H0.5 Z" fill="#e6c84a" stroke="#111" stroke-width="0.9"/><path d="M2 3.4 H4.6 M2 5 H4.6" stroke="#8a6d10" stroke-width="0.7"/><ellipse cx="7.8" cy="2.4" rx="3.6" ry="2.5" fill="#eaf2fc" stroke="#a8bcd8" stroke-width="0.5" transform="rotate(-18 7.8 2.4)"/><path d="M4.6 3.6 Q7 5.8 11 2.6 L11.2 3.6 Q7.4 7 4.8 4.6 Z" fill="#3f86d8"/><circle cx="7.6" cy="1.8" r="1.1" fill="#2f6fd0"/></g>
<text x="626" y="576.5" font-family="Liberation Sans, sans-serif" font-size="7.5" font-weight="bold" fill="#000" textLength="75.6" lengthAdjust="spacingAndGlyphs">2LIS_02_CGR/T90C...</text>
<rect x="737.5" y="568.6" width="95.2" height="14" fill="#ffd9a8" stroke="#ff8a1e" stroke-width="1"/>
<g transform="translate(741.2,569.7)"><path d="M0.5 1.6 H6.4 V7.4 H4.8 V10 H2.2 V7.4 H0.5 Z" fill="#e6c84a" stroke="#111" stroke-width="0.9"/><path d="M2 3.4 H4.6 M2 5 H4.6" stroke="#8a6d10" stroke-width="0.7"/><ellipse cx="7.8" cy="2.4" rx="3.6" ry="2.5" fill="#eaf2fc" stroke="#a8bcd8" stroke-width="0.5" transform="rotate(-18 7.8 2.4)"/><path d="M4.6 3.6 Q7 5.8 11 2.6 L11.2 3.6 Q7.4 7 4.8 4.6 Z" fill="#3f86d8"/><circle cx="7.6" cy="1.8" r="1.1" fill="#2f6fd0"/></g>
<text x="754" y="576.5" font-family="Liberation Sans, sans-serif" font-size="7.5" font-weight="bold" fill="#000" textLength="75.6" lengthAdjust="spacingAndGlyphs">2LIS_02_ITM/T90C...</text>
<rect x="865.5" y="568.6" width="95.2" height="14" fill="#ffd9a8" stroke="#ff8a1e" stroke-width="1"/>
<g transform="translate(869.2,569.7)"><path d="M0.5 1.6 H6.4 V7.4 H4.8 V10 H2.2 V7.4 H0.5 Z" fill="#e6c84a" stroke="#111" stroke-width="0.9"/><path d="M2 3.4 H4.6 M2 5 H4.6" stroke="#8a6d10" stroke-width="0.7"/><ellipse cx="7.8" cy="2.4" rx="3.6" ry="2.5" fill="#eaf2fc" stroke="#a8bcd8" stroke-width="0.5" transform="rotate(-18 7.8 2.4)"/><path d="M4.6 3.6 Q7 5.8 11 2.6 L11.2 3.6 Q7.4 7 4.8 4.6 Z" fill="#3f86d8"/><circle cx="7.6" cy="1.8" r="1.1" fill="#2f6fd0"/></g>
<text x="882" y="576.5" font-family="Liberation Sans, sans-serif" font-size="7.5" font-weight="bold" fill="#000" textLength="75.6" lengthAdjust="spacingAndGlyphs">2LIS_02_SCL/T90CL...</text></svg>
</div>

<div class="abs" id="l80" style="left:915px;top:557px;font-size:12px;letter-spacing:-0.47px;line-height:14px;color:#101c50">80%</div>
<div class="abs" style="left:939px;top:563px;width:98px;height:2px;background:#a9a9a9"></div>
<div class="abs" style="left:981px;top:558px;width:5px;height:12px;background:#3c3c3c"></div>
<div class="abs" style="left:988px;top:571px;width:1px;height:3px;background:#444"></div>
<div class="abs" style="left:1034px;top:571px;width:1px;height:3px;background:#444"></div>

<div id="hsb"></div>
<div id="vsb"></div>
<div class="menu">
<div class="mi"><span class="mic"><svg width="16" height="16" viewBox="0 0 16 16" ><defs><linearGradient id="xg" x1="0" y1="0" x2="0" y2="1"><stop offset="0" stop-color="#f4646a"/><stop offset="0.5" stop-color="#e81c24"/><stop offset="1" stop-color="#c80c14"/></linearGradient></defs><path d="M3 0.6 L8 5.2 L13 0.6 Q14.4 0.2 15.2 1.2 Q16 2.4 15.4 3.4 L10.8 8 L15.4 12.6 Q16 13.8 15.2 14.8 Q14.2 15.8 13 15.4 L8 10.8 L3 15.4 Q1.8 15.8 0.8 14.8 Q0 13.8 0.6 12.6 L5.2 8 L0.6 3.4 Q0 2.2 0.8 1.2 Q1.8 0.2 3 0.6 Z" fill="url(#xg)" stroke="#b00c14" stroke-width="0.5"/></svg></span><span class="mt" style="letter-spacing:-0.103px">Exclude from this view</span></div>
<div class="msep"></div>
<div class="mi"><span class="mic"><svg width="16" height="16" viewBox="0 0 16 16" ><rect x="1.6" y="0.6" width="12.8" height="14.8" fill="#fdfdff" stroke="#7f90b4" stroke-width="1"/><rect x="4" y="3" width="8" height="1" fill="#6a7fb0"/><rect x="4" y="5.4" width="3.6" height="1.6" fill="#a9b8dc"/><rect x="9" y="5.2" width="3" height="2.2" fill="#8fa0d0"/><rect x="4" y="8.6" width="8" height="0.9" fill="#8fa4d4"/><rect x="4" y="10.6" width="8" height="0.9" fill="#8fa4d4"/><rect x="4" y="12.6" width="8" height="1" fill="#3d6fe0"/></svg></span><span class="mt" style="letter-spacing:-0.159px">Scenario Assignment and Usage</span></div>
<div class="mi"><span class="mic"><svg width="16" height="16" viewBox="0 0 16 16" ><rect x="1.6" y="0.6" width="12.8" height="14.8" fill="#fdfdff" stroke="#7f90b4" stroke-width="1"/><rect x="4" y="3" width="8" height="1" fill="#6a7fb0"/><rect x="4" y="5.4" width="3.6" height="1.6" fill="#a9b8dc"/><rect x="9" y="5.2" width="3" height="2.2" fill="#8fa0d0"/><rect x="4" y="8.6" width="8" height="0.9" fill="#8fa4d4"/><rect x="4" y="10.6" width="8" height="0.9" fill="#8fa4d4"/><rect x="4" y="12.6" width="8" height="1" fill="#3d6fe0"/><rect x="7.2" y="7.8" width="8.8" height="7.4" fill="#3c3c3c"/><path d="M7.8 8.6 L10.8 11.5 L7.8 14.4 M11.4 8.6 L14.4 11.5 L11.4 14.4" fill="none" stroke="#35e41c" stroke-width="1.8"/></svg></span><span class="mt" style="letter-spacing:-0.11px">Scenario Quick Assignment</span><span class="marr"></span></div>
<div class="mi"><span class="mic"><svg width="16" height="16" viewBox="0 0 16 16" ><path d="M3 3 L6.2 3 L8.2 8 L6.2 12.8 L3 12.8 L5 8 Z" fill="#0b6cc8"/><path d="M6.6 1 L10.2 1 L12.8 8 L10.2 14.8 L6.6 14.8 L9 8 Z" fill="#1a98e2"/></svg></span><span class="mt" style="letter-spacing:0.065px">Collect for Migration Booster</span></div>
<div class="msep"></div>
<div class="mi"><span class="mic"><svg width="16" height="16" viewBox="0 0 16 16" ><rect x="1" y="2" width="12" height="12" fill="#fff" stroke="#1b5eb3" stroke-width="2"/><path d="M3.2 4.6 L4.9 4.6 L5.2 9 L7 4.6 L8.3 4.6 L8.6 9 L10.4 4.6 L12 4.6 L9.4 11.6 L7.6 11.6 L7.3 7.8 L5.7 11.6 L3.9 11.6 Z" fill="#1b5eb3"/><path d="M10 11.4 H12.8 V9.6 L16 12.6 L12.8 15.6 V13.8 H10 Z" fill="#3cc8ee" stroke="#fff" stroke-width="1.4" stroke-linejoin="round"/><path d="M10 11.4 H12.8 V9.6 L16 12.6 L12.8 15.6 V13.8 H10 Z" fill="#3cc8ee" stroke="#1d93c4" stroke-width="0.5"/></svg></span><span class="mt" style="letter-spacing:-0.054px">Create Documentation</span><span class="marr"></span></div>
<div class="mi"><span class="mic"><svg width="16" height="16" viewBox="0 0 16 16" ><path d="M3.6 0.6 H10.6 L14.4 4.4 V15.4 H3.6 Z" fill="#fafafa" stroke="#b4b4b4" stroke-width="1"/><path d="M10.6 0.6 V4.4 H14.4" fill="none" stroke="#b4b4b4" stroke-width="1"/><rect x="1.9" y="7.7" width="8" height="7.2" fill="#fff" stroke="#1b5eb3" stroke-width="1.4"/><path d="M3.2 9.4 L4.3 9.4 L4.6 12 L5.6 9.4 L6.5 9.4 L6.8 12 L7.8 9.4 L8.9 9.4 L7.2 13.4 L6 13.4 L5.8 11.2 L4.9 13.4 L3.7 13.4 Z" fill="#1b5eb3"/></svg></span><span class="mt" style="letter-spacing:0.055px">Open Documentation</span><span class="marr"></span></div>
<div class="msep"></div>
<div class="mi"><span class="mic"><svg width="16" height="16" viewBox="0 0 16 16" ><path d="M1.5 1.5 H14.5 Q15.5 1.5 15.5 2.5 V10.5 Q15.5 11.5 14.5 11.5 H7.5 L5 14.4 V11.5 H1.5 Q0.5 11.5 0.5 10.5 V2.5 Q0.5 1.5 1.5 1.5Z" fill="#f1f1f1" stroke="#8a8a8a" stroke-width="1"/><rect x="4" y="5.6" width="1.6" height="1.6" fill="#3b9fb4"/><rect x="7.2" y="5.6" width="1.6" height="1.6" fill="#3b9fb4"/><rect x="10.4" y="5.6" width="1.6" height="1.6" fill="#3b9fb4"/></svg></span><span class="mt" style="letter-spacing:-0.127px">Comments</span><span class="marr"></span></div>
<div class="msep"></div>
<div class="mi"><span class="mic"><svg width="16" height="16" viewBox="0 0 16 16" ><path d="M8 0 L15 4 V12 L8 16 L1 12 V4 Z" fill="#1575ca"/><path d="M8 3.1 L12.3 5.6 V10.4 L8 12.9 L3.7 10.4 V5.6 Z" fill="#fff"/><path d="M8 0 V2.8 M15 4 L12.6 5.4 M15 12 L12.6 10.6 M8 16 V13.2 M1 12 L3.4 10.6 M1 4 L3.4 5.4" stroke="#fff" stroke-width="0.7" transform="rotate(14 8 8)"/><rect x="5.2" y="8" width="1.3" height="2.6" fill="#1a8cd8"/><rect x="7.3" y="7" width="1.3" height="3.6" fill="#1a8cd8"/><rect x="9.5" y="6" width="1.3" height="4.6" fill="#1a8cd8"/></svg></span><span class="mt" style="letter-spacing:-0.278px">System Scout</span><span class="marr"></span></div>
<div class="msep"></div>
<div class="mi hl"><span class="mic"><svg width="16" height="16" viewBox="0 0 16 16" style="overflow:visible"><path d="M6.8 1.9 H9.2 L16 7.4 V8.6 L9.2 14.1 H6.8 L0 8.6 V7.4 Z" fill="#0c78c8"/><path d="M8 5.6 L10.5 8 L8 10.4 L5.5 8 Z" fill="#fff" stroke="#fff" stroke-width="0.6" stroke-linejoin="round"/></svg></span><span class="mt" style="letter-spacing:-0.127px">Open in Translation Steward</span></div>
<div class="msep"></div>
<div class="mi"><span class="mic"><svg width="16" height="16" viewBox="0 0 16 16" ><rect x="2" y="1" width="3" height="3" fill="#2f6fd8"/><rect x="2" y="6.6" width="3" height="3" fill="#2f6fd8"/><rect x="2" y="12" width="3" height="3" fill="#2f6fd8"/><rect x="6.8" y="1.8" width="8.4" height="1.4" fill="#111"/><rect x="6.8" y="7.4" width="8.4" height="1.4" fill="#111"/><rect x="6.8" y="12.8" width="8.4" height="1.4" fill="#111"/></svg></span><span class="mt" style="letter-spacing:-0.169px">Others</span><span class="marr"></span></div>
</div><div class="gold"></div>
</body></html>
